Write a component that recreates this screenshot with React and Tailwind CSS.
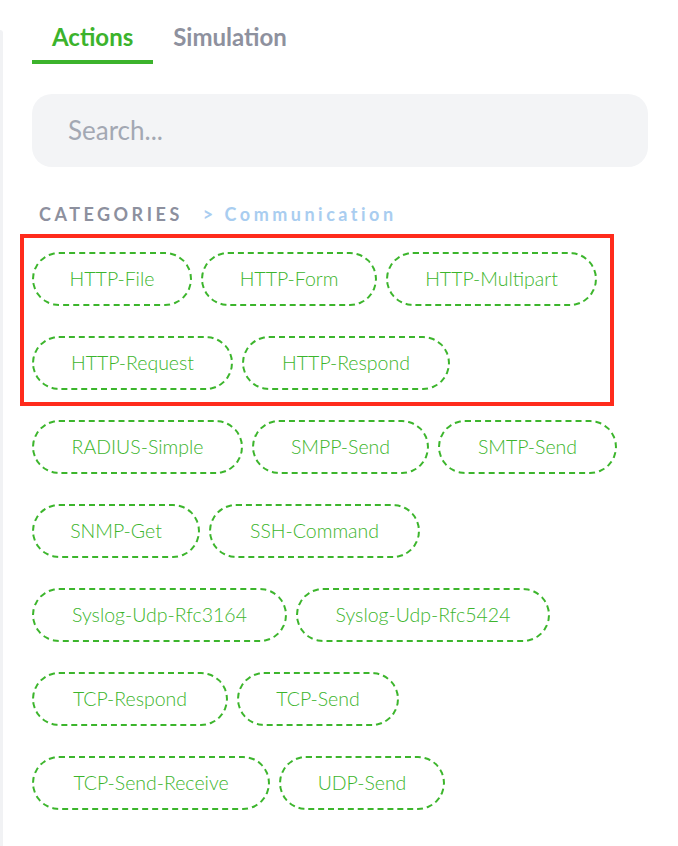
import React from "react";

const chips = [
  ["HTTP-File", 160], ["HTTP-Form", 176], ["HTTP-Multipart", 211],
  ["HTTP-Request", 201], ["HTTP-Respond", 208],
  ["RADIUS-Simple", 211], ["SMPP-Send", 177], ["SMTP-Send", 179],
  ["SNMP-Get", 168], ["SSH-Command", 211],
  ["Syslog-Udp-Rfc3164", 255], ["Syslog-Udp-Rfc5424", 254],
  ["TCP-Respond", 196], ["TCP-Send", 162],
  ["TCP-Send-Receive", 238], ["UDP-Send", 166],
];

export default function App() {
  return (
    <div className="flex h-[846px] w-[678px] overflow-hidden bg-white" style={{ fontFamily: "Lato, 'Noto Sans', sans-serif" }}>
      <div className="mt-[30px] w-[3px] shrink-0 rounded-tr-[3px] bg-[#f1f2f4]" />
      <div className="flex-1 pl-[29px] pr-[30px]">
        <div className="flex pt-[22px]">
          <div className="border-b-[4px] border-[#3cb32c] px-[20px] pb-[8px] text-[24px] font-bold leading-[30px] text-[#3cb32c]">Actions</div>
          <div className="px-[20px] pb-[8px] text-[24px] font-bold leading-[30px] text-[#8e919e]">Simulation</div>
        </div>
        <div className="mt-[30px] flex h-[73px] items-center rounded-[20px] bg-[#f3f4f6] pl-[36px] text-[26px] text-[#a3a8b3]">
          Search...
        </div>
        <div className="mt-[36px] flex items-center text-[18px] font-bold leading-[22px] tracking-[3.5px]">
          <span className="pl-[7px] text-[#8d909e]">CATEGORIES</span>
          <span className="ml-[20px] text-[#a9cdf0]">&gt; Communication</span>
        </div>
        <div className="relative mt-[27px] flex flex-wrap gap-x-[9px] gap-y-[30px] pr-[20px]">
          {chips.map(([label, w]) => (
            <div key={label} className="flex h-[54px] items-center justify-center rounded-full border-2 border-dashed border-[#3cb52c] text-[19.5px] font-light text-[#3cb52c]" style={{ width: w }}>
              {label}
            </div>
          ))}
          <div className="pointer-events-none absolute left-[-12px] top-[-18px] h-[172px] w-[594px] border-[4px] border-[#ff2b1c]" />
        </div>
      </div>
    </div>
  );
}
